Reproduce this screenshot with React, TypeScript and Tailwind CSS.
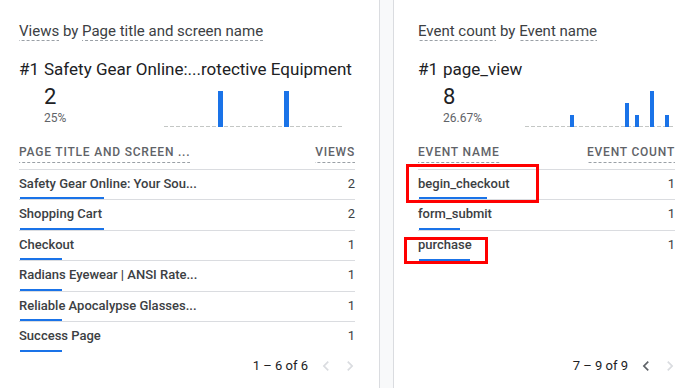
import { ReactNode } from "react";

type Row = { label: string; value: number; bar: number };
type Bar = { x: number; h: number; w?: number };

const pageRows: Row[] = [
  { label: "Safety Gear Online: Your Sou...", value: 2, bar: 84 },
  { label: "Shopping Cart", value: 2, bar: 84 },
  { label: "Checkout", value: 1, bar: 42 },
  { label: "Radians Eyewear | ANSI Rate...", value: 1, bar: 42 },
  { label: "Reliable Apocalypse Glasses...", value: 1, bar: 42 },
  { label: "Success Page", value: 1, bar: 42 },
];

const eventRows: Row[] = [
  { label: "begin_checkout", value: 1, bar: 68 },
  { label: "form_submit", value: 1, bar: 41 },
  { label: "purchase", value: 1, bar: 51 },
];

// linea punteada de GA debajo de los titulos
function Dashed({ children, pb = "pb-[1px]" }: { children: ReactNode; pb?: string }) {
  return (
    <span
      className={`${pb} bg-[linear-gradient(to_right,#9aa0a6_3px,transparent_3px)] bg-[length:5px_1px] bg-bottom bg-repeat-x`}
    >
      {children}
    </span>
  );
}

function Sparkline({ width, bars }: { width: number; bars: Bar[] }) {
  return (
    <svg width={width} height={37} className="block">
      <line x1={0} y1={35.5} x2={width} y2={35.5} stroke="#c4c7c5" strokeWidth={1} strokeDasharray="4 2" />
      {bars.map((b, i) => (
        <rect key={i} x={b.x} y={36 - b.h} width={b.w ?? 5} height={b.h} fill="#1a73e8" />
      ))}
    </svg>
  );
}

function Chevron({ dir, enabled }: { dir: "left" | "right"; enabled: boolean }) {
  return (
    <span className="flex w-[24px] items-center justify-center">
      <svg width={20} height={20} viewBox="0 0 24 24" fill={enabled ? "#5f6368" : "#dadce0"}>
        {dir === "left" ? (
          <path d="M15.41 7.41L14 6l-6 6 6 6 1.41-1.41L10.83 12z" />
        ) : (
          <path d="M8.59 16.59L10 18l6-6-6-6-1.41 1.41L13.17 12z" />
        )}
      </svg>
    </span>
  );
}

type CardProps = {
  metric: string;
  dimension: string;
  topName: string;
  topValue: string;
  topPct: string;
  chart: ReactNode;
  chartMargin: string;
  dimHeader: string;
  metricHeader: string;
  rows: Row[];
  pageText: string;
  prevEnabled: boolean;
  className: string;
};

function Card(p: CardProps) {
  return (
    <section className={`flex h-full flex-col bg-white pt-[21px] ${p.className}`}>
      <h2 className="text-[15px] leading-[20px] text-[#3c4043]">
        <Dashed>{p.metric}</Dashed> by <Dashed>{p.dimension}</Dashed>
      </h2>

      <div className="mt-[16px] flex text-[17px] leading-[24px] text-[#202124]">
        <span className="w-[25px] shrink-0">#1</span>
        <span className="whitespace-nowrap">{p.topName}</span>
      </div>

      <div className="mt-[3px] flex items-end">
        <div className="pl-[25px]">
          <div className="text-[22px] leading-[26px] text-[#202124]">{p.topValue}</div>
          <div className="text-[12px] leading-[16px] text-[#5f6368]">{p.topPct}</div>
        </div>
        <div className={`ml-auto mb-[-2px] ${p.chartMargin}`}>{p.chart}</div>
      </div>

      <div className="mt-[19px] flex justify-between border-b border-[#dadce0] pb-[6px] text-[12px] font-medium uppercase leading-[14px] tracking-[0.8px] text-[#5f6368]">
        <Dashed pb="pb-[4px]">{p.dimHeader}</Dashed>
        <Dashed pb="pb-[4px]">{p.metricHeader}</Dashed>
      </div>

      <div className="flex flex-col">
        {p.rows.map((r, i) => (
          <div
            key={r.label}
            className={`flex h-[30.4px] flex-col ${i < p.rows.length - 1 ? "border-b border-[#dadce0]" : ""}`}
          >
            <div className="flex flex-1 items-center justify-between text-[13px] text-[#3c4043]">
              <span className="font-medium">{r.label}</span>
              <span>{r.value}</span>
            </div>
            <div className="ml-[1px] h-[2px] bg-[#1a73e8]" style={{ width: r.bar }} />
          </div>
        ))}
      </div>

      <div className="mt-auto mb-[12px] mr-[-7px] flex items-center justify-end text-[13px] text-[#202124]">
        <span className="mr-[6px]">{p.pageText}</span>
        <Chevron dir="left" enabled={p.prevEnabled} />
        <Chevron dir="right" enabled={false} />
      </div>
    </section>
  );
}

export default function App() {
  return (
    <div className="relative flex h-[388px] w-[692px] overflow-hidden bg-white font-['Roboto',sans-serif]">
      <Card
        className="w-[380px] shrink-0 border-r border-[#dadce0] pl-[19px] pr-[24px]"
        metric="Views"
        dimension="Page title and screen name"
        topName="Safety Gear Online:...rotective Equipment"
        topValue="2"
        topPct="25%"
        chartMargin="mr-[11px]"
        chart={
          <Sparkline
            width={180}
            bars={[
              { x: 54, h: 36 },
              { x: 120, h: 36 },
            ]}
          />
        }
        dimHeader="Page title and screen ..."
        metricHeader="Views"
        rows={pageRows}
        pageText="1 – 6 of 6"
        prevEnabled={false}
      />

      <div className="w-[14px] shrink-0 border-r border-[#dadce0] bg-[#f8f9fa]" />

      <Card
        className="flex-1 pl-[24px] pr-[17px]"
        metric="Event count"
        dimension="Event name"
        topName="page_view"
        topValue="8"
        topPct="26.67%"
        chartMargin="mr-0"
        chart={
          <Sparkline
            width={150}
            bars={[
              { x: 45, h: 12, w: 4 },
              { x: 100, h: 24, w: 4 },
              { x: 110, h: 12, w: 4 },
              { x: 125, h: 36, w: 4 },
              { x: 140, h: 12, w: 4 },
            ]}
          />
        }
        dimHeader="Event name"
        metricHeader="Event count"
        rows={eventRows}
        pageText="7 – 9 of 9"
        prevEnabled={true}
      />

      {/* recuadros rojos de anotacion encima de la captura */}
      <div className="absolute left-[406px] top-[164px] h-[39px] w-[133px] border-[3px] border-[#ff0000]" />
      <div className="absolute left-[404px] top-[237px] h-[27px] w-[84px] border-[3px] border-[#ff0000]" />
    </div>
  );
}
